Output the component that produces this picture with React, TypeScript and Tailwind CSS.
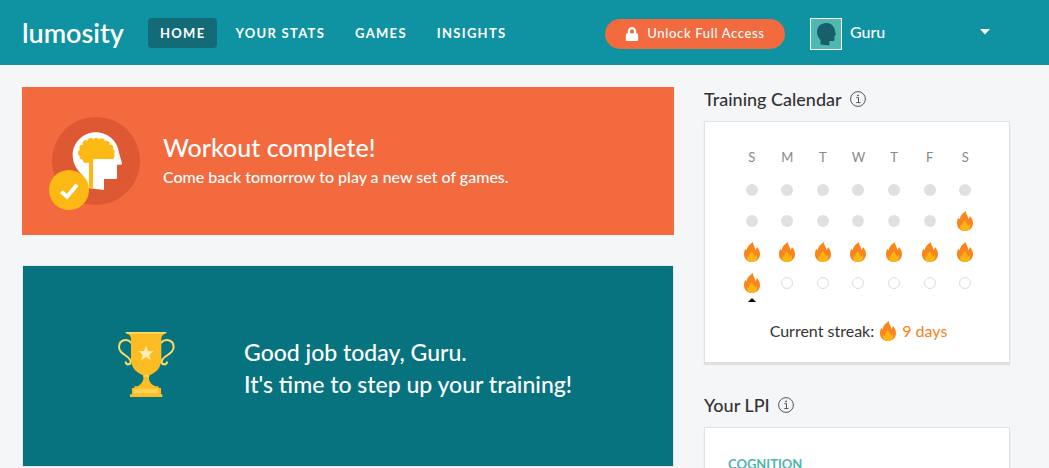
import { FaLock } from "react-icons/fa";

type Day = "past" | "streak" | "future";

const weekdays = [
  { short: "S", name: "Sunday" },
  { short: "M", name: "Monday" },
  { short: "T", name: "Tuesday" },
  { short: "W", name: "Wednesday" },
  { short: "T", name: "Thursday" },
  { short: "F", name: "Friday" },
  { short: "S", name: "Saturday" },
];

const weeks: Day[][] = [
  ["past", "past", "past", "past", "past", "past", "past"],
  ["past", "past", "past", "past", "past", "past", "streak"],
  ["streak", "streak", "streak", "streak", "streak", "streak", "streak"],
  ["streak", "future", "future", "future", "future", "future", "future"],
];

const links = ["Home", "Your Stats", "Games", "Insights"];

function Flame() {
  return (
    <svg viewBox="0 0 48 60" className="h-5 w-4 shrink-0" aria-hidden="true">
      <path
        d="M27 0C26 9 33 14 35 25L39 15C45 22 48 28 48 37C48 50 38 60 24 60C10 60 0 51 0 37C0 31 1 26 4 21L8 25C9 14 17 6 27 0Z"
        fill="#f9861d"
      />
      <path
        d="M24 27C25 34 31 37 33 45L38 38C42 51 36 60 24 60C12 60 7 52 11 41L15 45C15 38 19 33 24 27Z"
        fill="#fdb515"
      />
    </svg>
  );
}

function InfoIcon() {
  return (
    <svg viewBox="0 0 16 16" className="size-4" fill="none" stroke="#555" aria-hidden="true">
      <circle cx="8" cy="8" r="7.4" strokeWidth="1" />
      <path d="M6.3 6.700H8.500V11.600M6.200 11.600H10.500" strokeWidth="1" />
      <circle cx="8" cy="4.400" r="0.9" fill="#555" stroke="none" />
    </svg>
  );
}

function BrainBadge() {
  return (
    <svg viewBox="84 108 279 285" className="h-[95px] w-[93px] shrink-0" aria-hidden="true">
      <circle cx="228" cy="243" r="132" fill="#de5833" />
      <path
        d="M227 157C265 157 293 185 297 218L306 250Q307 254 302 254H291V294Q291 297 288 297H252V330L204 324C200 300 187 286 175 272C164 259 158 244 158 226C158 187 190 157 227 157Z"
        fill="#fff"
      />
      <g fill="#fdb913">
        <path d="M182 230C176 198 200 182 229 180C260 182 282 200 279 237H222Q219 237 219 243V325L207 323V247H192Z" />
        <circle cx="184" cy="219" r="10" />
        <circle cx="187" cy="203" r="9" />
        <circle cx="197" cy="190" r="9" />
        <circle cx="212" cy="183" r="9" />
        <circle cx="229" cy="181" r="8" />
        <circle cx="245" cy="184" r="9" />
        <circle cx="260" cy="191" r="9" />
        <circle cx="271" cy="203" r="9" />
        <circle cx="276" cy="216" r="8" />
        <circle cx="275" cy="228" r="9" />
        <circle cx="187" cy="230" r="8" />
        <circle cx="198" cy="240" r="9" />
        <circle cx="209" cy="240" r="9" />
      </g>
      <circle cx="147" cy="330" r="60" fill="#fdb913" />
      <path d="M124 335L141 350L171 314" fill="none" stroke="#fff" strokeWidth="12" />
    </svg>
  );
}

function Trophy() {
  return (
    <svg viewBox="81 60 177 201" className="h-[67px] w-[59px] shrink-0" aria-hidden="true">
      <g fill="none" stroke="#fbdb6b" strokeWidth="6" strokeLinecap="round">
        <path d="M123 95C113 82 88 84 87 108C87 132 119 132 122 151C123 162 109 163 107 154" />
        <path d="M214 95C224 82 250 84 251 108C251 132 218 132 215 151C214 162 229 163 231 154" />
      </g>
      <path
        d="M107 63H229V67Q214 71 214 84V145C214 174 194 187 178 193C174 207 180 219 196 226H206V231H213V250H217V258H120V250H126V231H133V226H143C157 218 163 207 159 193C142 186 123 173 123 145V84Q123 71 107 67Z"
        fill="#fdbd22"
      />
      <path d="M107 63H229L225 68H111ZM160 193H178V197H160Z" fill="#fbdb6b" />
      <rect x="133" y="233" width="71" height="14" fill="#fdd258" />
      <path
        d="M168 105L174 120L190 121L178 131L182 147L168 138L154 147L158 131L146 121L162 120Z"
        fill="#feeeb2"
      />
    </svg>
  );
}

function Avatar() {
  return (
    <svg viewBox="0 0 32 32" className="size-8 shrink-0" aria-hidden="true">
      <rect x="0.5" y="0.5" width="31" height="31" fill="#4fb8b0" stroke="#fff" />
      <path
        d="M16 5C21 5 24.600 8.500 25 13L26 17.300H24.500V21.500Q24.500 23 23 23H19.500V27.500L10.500 26.500V22C8.500 20 7 17.500 7 14C7 8.800 11 5 16 5Z"
        fill="#165f6b"
      />
    </svg>
  );
}

function DayMark({ day }: { day: Day }) {
  if (day === "streak") return <Flame />;
  if (day === "past") return <span className="size-3 rounded-full bg-[#e0e0e0]" />;
  return <span className="size-3 rounded-full border border-[#dcdcdc]" />;
}

function SectionTitle({ children }: { children: string }) {
  return (
    <h2 className="flex h-6 items-center gap-2 text-[18px] leading-6 font-medium text-[#333]">
      {children}
      <InfoIcon />
    </h2>
  );
}

export default function App() {
  return (
    <div className="min-h-screen bg-[#f5f6f8] font-['Lato','Liberation_Sans',sans-serif]">
      <header className="flex h-[65px] items-center bg-[#0f92a1] pr-[39px] pl-[22px] text-white">
        <a href="#home" className="w-[126px] shrink-0 text-[27px] leading-8 font-semibold">
          lumosity
        </a>
        <nav className="flex gap-1.5">
          {links.map((label, i) => (
            <a
              key={label}
              href={"#" + label.toLowerCase().replace(" ", "-")}
              className={
                i === 0
                  ? "rounded bg-[#146b78] px-3 text-[13px] leading-[30px] font-bold tracking-widest whitespace-nowrap uppercase"
                  : "px-3 text-[13px] leading-[30px] font-bold tracking-widest whitespace-nowrap uppercase"
              }
            >
              {label}
            </a>
          ))}
        </nav>
        <div className="ml-auto flex shrink-0 items-center gap-[25px] pt-[3px]">
          <button className="flex h-[30px] w-[180px] items-center justify-center gap-2 rounded-full bg-[#f26a3e] text-[13px] font-medium tracking-wider whitespace-nowrap">
            <FaLock className="size-3.5" />
            Unlock Full Access
          </button>
          <button className="flex w-[200px] items-center gap-2 pr-5 text-[16px] leading-6 font-medium">
            <Avatar />
            <span className="flex flex-1 items-center justify-between pb-1">
              Guru
              <svg viewBox="0 0 10 6" className="h-1.5 w-2.5" aria-hidden="true">
                <path d="M0 0H10L5 5.500Z" fill="#fff" />
              </svg>
            </span>
          </button>
        </div>
      </header>

      <div className="grid grid-cols-[minmax(0,1fr)_306px] gap-[30px] pt-[22px] pr-[39px] pl-[22px]">
        <main className="flex flex-col gap-[30px]">
          <section className="flex min-h-[148px] items-center gap-[22px] bg-[#f26a3e] px-[26px] pt-1 text-white">
            <BrainBadge />
            <div className="pb-1">
              <h1 className="text-[25px] leading-8 font-medium">Workout complete!</h1>
              <p className="text-[16px] leading-7 font-medium">
                Come back tomorrow to play a new set of games.
              </p>
            </div>
          </section>
          <section className="flex min-h-[202px] items-center gap-[68px] border border-[#e3e7ea] bg-[#07737f] px-[94px] pb-1 text-white">
            <Trophy />
            <p className="pt-2 text-[23px] leading-8 font-medium">
              Good job today, Guru.
              <br />
              It's time to step up your training!
            </p>
          </section>
        </main>

        <aside className="flex flex-col gap-[30px]">
          <section className="flex flex-col gap-2.5">
            <SectionTitle>Training Calendar</SectionTitle>
            <div className="border border-[#dfe1e5] bg-white pt-5 pr-[26px] pb-[17px] pl-[29px] shadow-[0_2px_1px_#dfe1e3]">
              <table className="w-full table-fixed">
                <thead>
                  <tr className="h-8">
                    {weekdays.map((d) => (
                      <th key={d.name} abbr={d.name} className="text-[13px] font-normal text-[#888]">
                        {d.short}
                      </th>
                    ))}
                  </tr>
                </thead>
                <tbody>
                  {weeks.map((week, w) => (
                    <tr key={w} className="h-[31px]">
                      {week.map((day, d) => (
                        <td key={d} className="p-0">
                          <div className="flex items-center justify-center">
                            <DayMark day={day} />
                          </div>
                        </td>
                      ))}
                    </tr>
                  ))}
                  <tr>
                    <td className="p-0">
                      <svg viewBox="0 0 8 4" className="mx-auto h-1 w-2" aria-label="Today">
                        <path d="M4 0L8 4H0Z" />
                      </svg>
                    </td>
                  </tr>
                </tbody>
              </table>
              <p className="mt-[15px] flex h-7 items-center justify-center gap-1.5 text-[16px] text-[#333]">
                Current streak:
                <span className="flex items-center gap-1.5 text-[#f58220]">
                  <Flame />9 days
                </span>
              </p>
            </div>
          </section>

          <section className="flex flex-col gap-2.5">
            <SectionTitle>Your LPI</SectionTitle>
            <div className="border border-[#dfe1e5] bg-white px-[23px] py-7 shadow-[0_2px_1px_#dfe1e3]">
              <h3 className="text-[13px] leading-4 font-bold text-[#4db6ac]">COGNITION</h3>
            </div>
          </section>
        </aside>
      </div>
    </div>
  );
}
